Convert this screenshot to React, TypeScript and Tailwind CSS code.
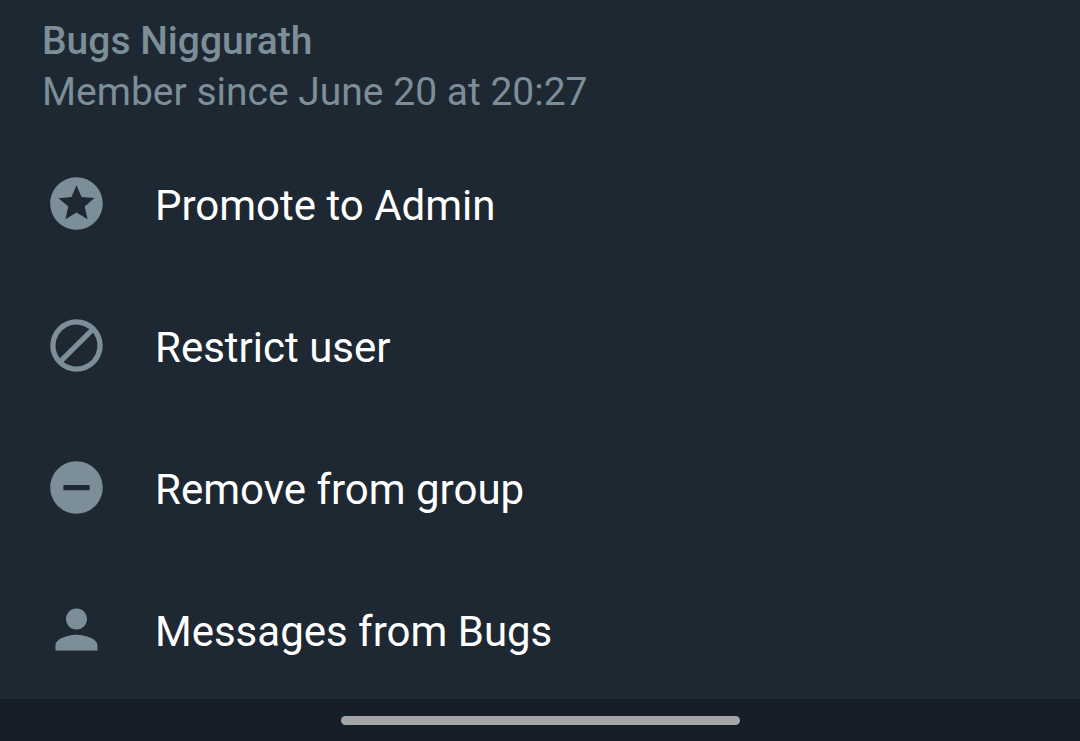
import React from 'react';

const actions = [
  {
    label: 'Promote to Admin',
    // star in a filled circle
    path: 'M11.99 2C6.47 2 2 6.48 2 12s4.47 10 9.99 10C17.52 22 22 17.52 22 12S17.52 2 11.99 2zm4.24 16L12 15.45 7.77 18l1.12-4.81-3.73-3.23 4.92-.42L12 5l1.92 4.53 4.92.42-3.73 3.23L16.23 18z',
  },
  {
    label: 'Restrict user',
    // circle with a rising slash
    path: 'M12 2a10 10 0 1 0 0 20 10 10 0 0 0 0-20zM4 12a8 8 0 0 1 12.9-6.31L5.69 16.9A7.9 7.9 0 0 1 4 12zm8 8a7.9 7.9 0 0 1-4.9-1.69L18.31 7.1A8 8 0 0 1 12 20z',
  },
  {
    label: 'Remove from group',
    path: 'M12 2C6.48 2 2 6.48 2 12s4.48 10 10 10 10-4.48 10-10S17.52 2 12 2zm5 11H7v-2h10v2z',
  },
  {
    label: 'Messages from Bugs',
    path: 'M12 12c2.21 0 4-1.79 4-4s-1.79-4-4-4-4 1.79-4 4 1.79 4 4 4zm0 2c-2.67 0-8 1.34-8 4v2h16v-2c0-2.66-5.33-4-8-4z',
  },
];

function ActionItem({ label, path }: { label: string; path: string }) {
  return (
    <button type="button" className="flex h-[142px] w-full items-center gap-[47px] px-[45px] pt-[3px] text-left">
      <svg viewBox="0 0 24 24" className="size-[63px] shrink-0 fill-[#7c8e98]" aria-hidden="true">
        <path fillRule="evenodd" d={path} />
      </svg>
      <span className="pt-1 text-[42px] leading-[50px] text-white">{label}</span>
    </button>
  );
}

export default function App() {
  return (
    <div className="flex min-h-screen flex-col bg-[#1e2832] font-['Roboto',sans-serif]">
      {/* Member info */}
      <header className="px-[42px] pt-4 text-[39px] leading-[51px] text-[#7c8e98]">
        <h1 className="font-medium">Bugs Niggurath</h1>
        <p>Member since June 20 at 20:27</p>
      </header>

      {/* Actions */}
      <main className="flex-grow pt-[13px]">
        {actions.map((action) => (
          <ActionItem key={action.label} label={action.label} path={action.path} />
        ))}
      </main>

      {/* Gesture bar */}
      <footer className="flex h-[42px] flex-shrink-0 items-center justify-center bg-[#151d26]">
        <div className="h-[9px] w-[399px] rounded-full bg-[#a4a5a7]" />
      </footer>
    </div>
  );
}
